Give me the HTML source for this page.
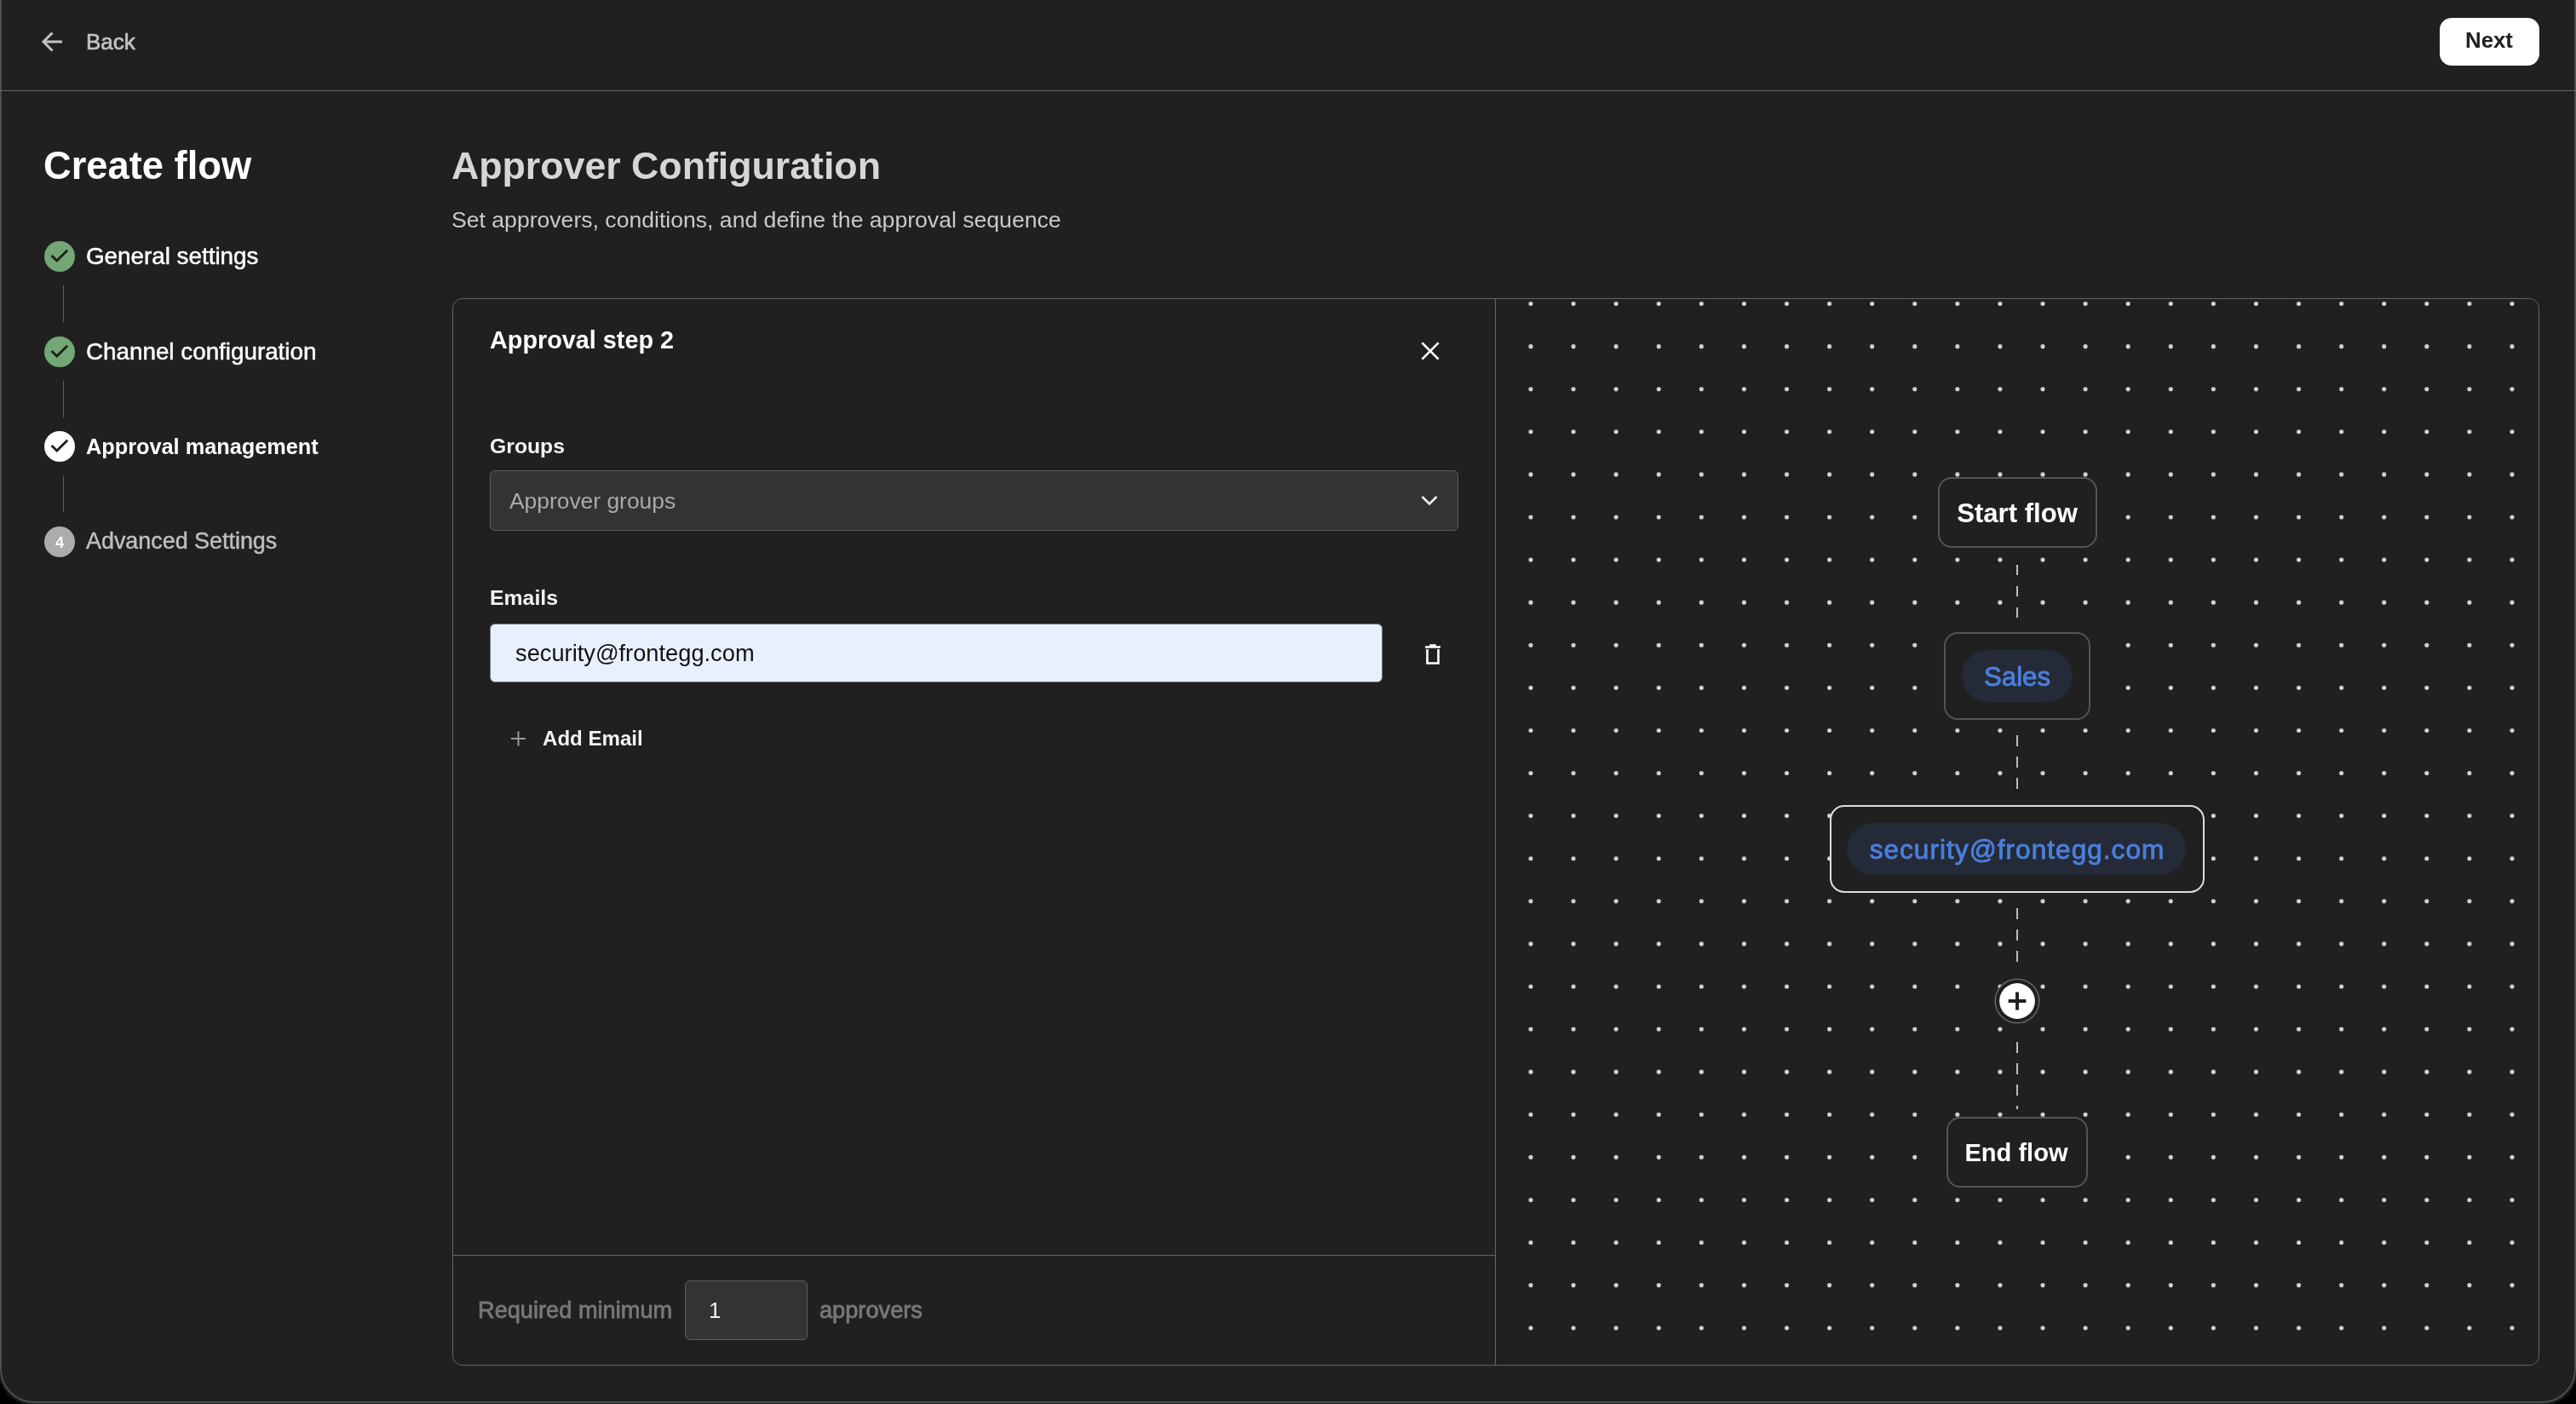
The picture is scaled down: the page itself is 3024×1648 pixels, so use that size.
<!DOCTYPE html>
<html><head><meta charset="utf-8"><title>Create flow</title>
<style>
html,body{margin:0;padding:0;background:#000;width:3024px;height:1648px;overflow:hidden;}
body{position:relative;font-family:"Liberation Sans", sans-serif;}
@media (max-width:2000px){html{zoom:0.5;}}
.t{position:absolute;white-space:nowrap;line-height:1;font-family:"Liberation Sans", sans-serif;will-change:transform;}
</style></head><body>
<div style="position:absolute;left:-2px;top:-60px;width:3028px;height:1710px;background:#161a1b;border-radius:0 0 42px 42px;"></div>
<div style="position:absolute;left:0;top:-40px;width:3024px;height:1687px;box-sizing:border-box;background:#202020;border:2px solid #4f4f4f;border-radius:0 0 40px 40px;"></div>
<div style="position:absolute;left:0px;top:106px;width:3024px;height:1px;box-sizing:border-box;background:#666;"></div>
<svg style="position:absolute;left:0;top:0" width="120" height="100"><path d="M73 49H51.5M61.5 38.5L51 49L61.5 59.5" fill="none" stroke="#c2c2c2" stroke-width="3"/></svg>
<div class="t" style="left:101.0px;top:36.0px;font-size:26px;font-weight:400;color:#c2c2c2;-webkit-text-stroke:0.7px #c2c2c2;">Back</div>
<div style="position:absolute;left:2864px;top:21px;width:117px;height:56px;box-sizing:border-box;background:#fff;border-radius:14px;"></div>
<div class="t" style="left:2422.2px;width:1000px;text-align:center;top:35.2px;font-size:25.8px;font-weight:700;color:#212121;">Next</div>
<div class="t" style="left:51.0px;top:172.2px;font-size:45.3px;font-weight:700;color:#fff;">Create flow</div>
<svg style="position:absolute;left:52px;top:283px" width="36" height="36"><circle cx="18" cy="18" r="18" fill="#73a775"/><path d="M8.6 16.9L14.8 23.1L27.2 10.8" fill="none" stroke="#1e1e1e" stroke-width="2.8"/></svg>
<div class="t" style="left:101.0px;top:286.8px;font-size:27.8px;font-weight:400;color:#fff;-webkit-text-stroke:0.5px #fff;">General settings</div>
<div style="position:absolute;left:73.5px;top:335px;width:1.0px;height:43px;box-sizing:border-box;background:#5e5e5e;"></div>
<svg style="position:absolute;left:52px;top:394.7px" width="36" height="36"><circle cx="18" cy="18" r="18" fill="#73a775"/><path d="M8.6 16.9L14.8 23.1L27.2 10.8" fill="none" stroke="#1e1e1e" stroke-width="2.8"/></svg>
<div class="t" style="left:101.0px;top:398.5px;font-size:27.8px;font-weight:400;color:#fff;-webkit-text-stroke:0.5px #fff;">Channel configuration</div>
<div style="position:absolute;left:73.5px;top:446.7px;width:1.0px;height:43.0px;box-sizing:border-box;background:#5e5e5e;"></div>
<svg style="position:absolute;left:52px;top:506px" width="36" height="36"><circle cx="18" cy="18" r="18" fill="#fff"/><path d="M8.6 16.9L14.8 23.1L27.2 10.8" fill="none" stroke="#1e1e1e" stroke-width="2.8"/></svg>
<div class="t" style="left:101.0px;top:511.9px;font-size:25.3px;font-weight:700;color:#fff;">Approval management</div>
<div style="position:absolute;left:73.5px;top:558px;width:1.0px;height:43px;box-sizing:border-box;background:#5e5e5e;"></div>
<svg style="position:absolute;left:52px;top:618px" width="36" height="36"><circle cx="18" cy="18" r="18" fill="#acacac"/></svg>
<div class="t" style="left:-430.0px;width:1000px;text-align:center;top:627.8px;font-size:18px;font-weight:700;color:#fff;">4</div>
<div class="t" style="left:101.0px;top:622.0px;font-size:26.9px;font-weight:400;color:#bfbfbf;-webkit-text-stroke:0.45px #bfbfbf;">Advanced Settings</div>
<div class="t" style="left:530.0px;top:172.7px;font-size:44.7px;font-weight:700;color:#d6d6d6;">Approver Configuration</div>
<div class="t" style="left:530.0px;top:244.9px;font-size:26.6px;font-weight:400;color:#c9c9c9;">Set approvers, conditions, and define the approval sequence</div>
<div style="position:absolute;left:531px;top:350px;width:2450px;height:1253px;box-sizing:border-box;border:1px solid #646464;border-radius:12px;"></div>
<div style="position:absolute;left:1755px;top:351px;width:1px;height:1251px;box-sizing:border-box;background:#646464;"></div>
<div style="position:absolute;left:532px;top:1473px;width:1223px;height:1px;box-sizing:border-box;background:#646464;"></div>
<svg style="position:absolute;left:1757px;top:351px" width="1223" height="1251" fill="#d2d2d2"><circle cx="39.97" cy="5.54" r="2.55"/><circle cx="39.97" cy="55.63" r="2.55"/><circle cx="39.97" cy="105.72" r="2.55"/><circle cx="39.97" cy="155.81" r="2.55"/><circle cx="39.97" cy="205.90" r="2.55"/><circle cx="39.97" cy="255.99" r="2.55"/><circle cx="39.97" cy="306.08" r="2.55"/><circle cx="39.97" cy="356.17" r="2.55"/><circle cx="39.97" cy="406.26" r="2.55"/><circle cx="39.97" cy="456.35" r="2.55"/><circle cx="39.97" cy="506.44" r="2.55"/><circle cx="39.97" cy="556.53" r="2.55"/><circle cx="39.97" cy="606.62" r="2.55"/><circle cx="39.97" cy="656.71" r="2.55"/><circle cx="39.97" cy="706.80" r="2.55"/><circle cx="39.97" cy="756.89" r="2.55"/><circle cx="39.97" cy="806.98" r="2.55"/><circle cx="39.97" cy="857.07" r="2.55"/><circle cx="39.97" cy="907.16" r="2.55"/><circle cx="39.97" cy="957.25" r="2.55"/><circle cx="39.97" cy="1007.34" r="2.55"/><circle cx="39.97" cy="1057.43" r="2.55"/><circle cx="39.97" cy="1107.52" r="2.55"/><circle cx="39.97" cy="1157.61" r="2.55"/><circle cx="39.97" cy="1207.70" r="2.55"/><circle cx="90.06" cy="5.54" r="2.55"/><circle cx="90.06" cy="55.63" r="2.55"/><circle cx="90.06" cy="105.72" r="2.55"/><circle cx="90.06" cy="155.81" r="2.55"/><circle cx="90.06" cy="205.90" r="2.55"/><circle cx="90.06" cy="255.99" r="2.55"/><circle cx="90.06" cy="306.08" r="2.55"/><circle cx="90.06" cy="356.17" r="2.55"/><circle cx="90.06" cy="406.26" r="2.55"/><circle cx="90.06" cy="456.35" r="2.55"/><circle cx="90.06" cy="506.44" r="2.55"/><circle cx="90.06" cy="556.53" r="2.55"/><circle cx="90.06" cy="606.62" r="2.55"/><circle cx="90.06" cy="656.71" r="2.55"/><circle cx="90.06" cy="706.80" r="2.55"/><circle cx="90.06" cy="756.89" r="2.55"/><circle cx="90.06" cy="806.98" r="2.55"/><circle cx="90.06" cy="857.07" r="2.55"/><circle cx="90.06" cy="907.16" r="2.55"/><circle cx="90.06" cy="957.25" r="2.55"/><circle cx="90.06" cy="1007.34" r="2.55"/><circle cx="90.06" cy="1057.43" r="2.55"/><circle cx="90.06" cy="1107.52" r="2.55"/><circle cx="90.06" cy="1157.61" r="2.55"/><circle cx="90.06" cy="1207.70" r="2.55"/><circle cx="140.14" cy="5.54" r="2.55"/><circle cx="140.14" cy="55.63" r="2.55"/><circle cx="140.14" cy="105.72" r="2.55"/><circle cx="140.14" cy="155.81" r="2.55"/><circle cx="140.14" cy="205.90" r="2.55"/><circle cx="140.14" cy="255.99" r="2.55"/><circle cx="140.14" cy="306.08" r="2.55"/><circle cx="140.14" cy="356.17" r="2.55"/><circle cx="140.14" cy="406.26" r="2.55"/><circle cx="140.14" cy="456.35" r="2.55"/><circle cx="140.14" cy="506.44" r="2.55"/><circle cx="140.14" cy="556.53" r="2.55"/><circle cx="140.14" cy="606.62" r="2.55"/><circle cx="140.14" cy="656.71" r="2.55"/><circle cx="140.14" cy="706.80" r="2.55"/><circle cx="140.14" cy="756.89" r="2.55"/><circle cx="140.14" cy="806.98" r="2.55"/><circle cx="140.14" cy="857.07" r="2.55"/><circle cx="140.14" cy="907.16" r="2.55"/><circle cx="140.14" cy="957.25" r="2.55"/><circle cx="140.14" cy="1007.34" r="2.55"/><circle cx="140.14" cy="1057.43" r="2.55"/><circle cx="140.14" cy="1107.52" r="2.55"/><circle cx="140.14" cy="1157.61" r="2.55"/><circle cx="140.14" cy="1207.70" r="2.55"/><circle cx="190.23" cy="5.54" r="2.55"/><circle cx="190.23" cy="55.63" r="2.55"/><circle cx="190.23" cy="105.72" r="2.55"/><circle cx="190.23" cy="155.81" r="2.55"/><circle cx="190.23" cy="205.90" r="2.55"/><circle cx="190.23" cy="255.99" r="2.55"/><circle cx="190.23" cy="306.08" r="2.55"/><circle cx="190.23" cy="356.17" r="2.55"/><circle cx="190.23" cy="406.26" r="2.55"/><circle cx="190.23" cy="456.35" r="2.55"/><circle cx="190.23" cy="506.44" r="2.55"/><circle cx="190.23" cy="556.53" r="2.55"/><circle cx="190.23" cy="606.62" r="2.55"/><circle cx="190.23" cy="656.71" r="2.55"/><circle cx="190.23" cy="706.80" r="2.55"/><circle cx="190.23" cy="756.89" r="2.55"/><circle cx="190.23" cy="806.98" r="2.55"/><circle cx="190.23" cy="857.07" r="2.55"/><circle cx="190.23" cy="907.16" r="2.55"/><circle cx="190.23" cy="957.25" r="2.55"/><circle cx="190.23" cy="1007.34" r="2.55"/><circle cx="190.23" cy="1057.43" r="2.55"/><circle cx="190.23" cy="1107.52" r="2.55"/><circle cx="190.23" cy="1157.61" r="2.55"/><circle cx="190.23" cy="1207.70" r="2.55"/><circle cx="240.32" cy="5.54" r="2.55"/><circle cx="240.32" cy="55.63" r="2.55"/><circle cx="240.32" cy="105.72" r="2.55"/><circle cx="240.32" cy="155.81" r="2.55"/><circle cx="240.32" cy="205.90" r="2.55"/><circle cx="240.32" cy="255.99" r="2.55"/><circle cx="240.32" cy="306.08" r="2.55"/><circle cx="240.32" cy="356.17" r="2.55"/><circle cx="240.32" cy="406.26" r="2.55"/><circle cx="240.32" cy="456.35" r="2.55"/><circle cx="240.32" cy="506.44" r="2.55"/><circle cx="240.32" cy="556.53" r="2.55"/><circle cx="240.32" cy="606.62" r="2.55"/><circle cx="240.32" cy="656.71" r="2.55"/><circle cx="240.32" cy="706.80" r="2.55"/><circle cx="240.32" cy="756.89" r="2.55"/><circle cx="240.32" cy="806.98" r="2.55"/><circle cx="240.32" cy="857.07" r="2.55"/><circle cx="240.32" cy="907.16" r="2.55"/><circle cx="240.32" cy="957.25" r="2.55"/><circle cx="240.32" cy="1007.34" r="2.55"/><circle cx="240.32" cy="1057.43" r="2.55"/><circle cx="240.32" cy="1107.52" r="2.55"/><circle cx="240.32" cy="1157.61" r="2.55"/><circle cx="240.32" cy="1207.70" r="2.55"/><circle cx="290.40" cy="5.54" r="2.55"/><circle cx="290.40" cy="55.63" r="2.55"/><circle cx="290.40" cy="105.72" r="2.55"/><circle cx="290.40" cy="155.81" r="2.55"/><circle cx="290.40" cy="205.90" r="2.55"/><circle cx="290.40" cy="255.99" r="2.55"/><circle cx="290.40" cy="306.08" r="2.55"/><circle cx="290.40" cy="356.17" r="2.55"/><circle cx="290.40" cy="406.26" r="2.55"/><circle cx="290.40" cy="456.35" r="2.55"/><circle cx="290.40" cy="506.44" r="2.55"/><circle cx="290.40" cy="556.53" r="2.55"/><circle cx="290.40" cy="606.62" r="2.55"/><circle cx="290.40" cy="656.71" r="2.55"/><circle cx="290.40" cy="706.80" r="2.55"/><circle cx="290.40" cy="756.89" r="2.55"/><circle cx="290.40" cy="806.98" r="2.55"/><circle cx="290.40" cy="857.07" r="2.55"/><circle cx="290.40" cy="907.16" r="2.55"/><circle cx="290.40" cy="957.25" r="2.55"/><circle cx="290.40" cy="1007.34" r="2.55"/><circle cx="290.40" cy="1057.43" r="2.55"/><circle cx="290.40" cy="1107.52" r="2.55"/><circle cx="290.40" cy="1157.61" r="2.55"/><circle cx="290.40" cy="1207.70" r="2.55"/><circle cx="340.49" cy="5.54" r="2.55"/><circle cx="340.49" cy="55.63" r="2.55"/><circle cx="340.49" cy="105.72" r="2.55"/><circle cx="340.49" cy="155.81" r="2.55"/><circle cx="340.49" cy="205.90" r="2.55"/><circle cx="340.49" cy="255.99" r="2.55"/><circle cx="340.49" cy="306.08" r="2.55"/><circle cx="340.49" cy="356.17" r="2.55"/><circle cx="340.49" cy="406.26" r="2.55"/><circle cx="340.49" cy="456.35" r="2.55"/><circle cx="340.49" cy="506.44" r="2.55"/><circle cx="340.49" cy="556.53" r="2.55"/><circle cx="340.49" cy="606.62" r="2.55"/><circle cx="340.49" cy="656.71" r="2.55"/><circle cx="340.49" cy="706.80" r="2.55"/><circle cx="340.49" cy="756.89" r="2.55"/><circle cx="340.49" cy="806.98" r="2.55"/><circle cx="340.49" cy="857.07" r="2.55"/><circle cx="340.49" cy="907.16" r="2.55"/><circle cx="340.49" cy="957.25" r="2.55"/><circle cx="340.49" cy="1007.34" r="2.55"/><circle cx="340.49" cy="1057.43" r="2.55"/><circle cx="340.49" cy="1107.52" r="2.55"/><circle cx="340.49" cy="1157.61" r="2.55"/><circle cx="340.49" cy="1207.70" r="2.55"/><circle cx="390.58" cy="5.54" r="2.55"/><circle cx="390.58" cy="55.63" r="2.55"/><circle cx="390.58" cy="105.72" r="2.55"/><circle cx="390.58" cy="155.81" r="2.55"/><circle cx="390.58" cy="205.90" r="2.55"/><circle cx="390.58" cy="255.99" r="2.55"/><circle cx="390.58" cy="306.08" r="2.55"/><circle cx="390.58" cy="356.17" r="2.55"/><circle cx="390.58" cy="406.26" r="2.55"/><circle cx="390.58" cy="456.35" r="2.55"/><circle cx="390.58" cy="506.44" r="2.55"/><circle cx="390.58" cy="556.53" r="2.55"/><circle cx="390.58" cy="606.62" r="2.55"/><circle cx="390.58" cy="656.71" r="2.55"/><circle cx="390.58" cy="706.80" r="2.55"/><circle cx="390.58" cy="756.89" r="2.55"/><circle cx="390.58" cy="806.98" r="2.55"/><circle cx="390.58" cy="857.07" r="2.55"/><circle cx="390.58" cy="907.16" r="2.55"/><circle cx="390.58" cy="957.25" r="2.55"/><circle cx="390.58" cy="1007.34" r="2.55"/><circle cx="390.58" cy="1057.43" r="2.55"/><circle cx="390.58" cy="1107.52" r="2.55"/><circle cx="390.58" cy="1157.61" r="2.55"/><circle cx="390.58" cy="1207.70" r="2.55"/><circle cx="440.67" cy="5.54" r="2.55"/><circle cx="440.67" cy="55.63" r="2.55"/><circle cx="440.67" cy="105.72" r="2.55"/><circle cx="440.67" cy="155.81" r="2.55"/><circle cx="440.67" cy="205.90" r="2.55"/><circle cx="440.67" cy="255.99" r="2.55"/><circle cx="440.67" cy="306.08" r="2.55"/><circle cx="440.67" cy="356.17" r="2.55"/><circle cx="440.67" cy="406.26" r="2.55"/><circle cx="440.67" cy="456.35" r="2.55"/><circle cx="440.67" cy="506.44" r="2.55"/><circle cx="440.67" cy="556.53" r="2.55"/><circle cx="440.67" cy="606.62" r="2.55"/><circle cx="440.67" cy="656.71" r="2.55"/><circle cx="440.67" cy="706.80" r="2.55"/><circle cx="440.67" cy="756.89" r="2.55"/><circle cx="440.67" cy="806.98" r="2.55"/><circle cx="440.67" cy="857.07" r="2.55"/><circle cx="440.67" cy="907.16" r="2.55"/><circle cx="440.67" cy="957.25" r="2.55"/><circle cx="440.67" cy="1007.34" r="2.55"/><circle cx="440.67" cy="1057.43" r="2.55"/><circle cx="440.67" cy="1107.52" r="2.55"/><circle cx="440.67" cy="1157.61" r="2.55"/><circle cx="440.67" cy="1207.70" r="2.55"/><circle cx="490.75" cy="5.54" r="2.55"/><circle cx="490.75" cy="55.63" r="2.55"/><circle cx="490.75" cy="105.72" r="2.55"/><circle cx="490.75" cy="155.81" r="2.55"/><circle cx="490.75" cy="205.90" r="2.55"/><circle cx="490.75" cy="255.99" r="2.55"/><circle cx="490.75" cy="306.08" r="2.55"/><circle cx="490.75" cy="356.17" r="2.55"/><circle cx="490.75" cy="406.26" r="2.55"/><circle cx="490.75" cy="456.35" r="2.55"/><circle cx="490.75" cy="506.44" r="2.55"/><circle cx="490.75" cy="556.53" r="2.55"/><circle cx="490.75" cy="606.62" r="2.55"/><circle cx="490.75" cy="656.71" r="2.55"/><circle cx="490.75" cy="706.80" r="2.55"/><circle cx="490.75" cy="756.89" r="2.55"/><circle cx="490.75" cy="806.98" r="2.55"/><circle cx="490.75" cy="857.07" r="2.55"/><circle cx="490.75" cy="907.16" r="2.55"/><circle cx="490.75" cy="957.25" r="2.55"/><circle cx="490.75" cy="1007.34" r="2.55"/><circle cx="490.75" cy="1057.43" r="2.55"/><circle cx="490.75" cy="1107.52" r="2.55"/><circle cx="490.75" cy="1157.61" r="2.55"/><circle cx="490.75" cy="1207.70" r="2.55"/><circle cx="540.84" cy="5.54" r="2.55"/><circle cx="540.84" cy="55.63" r="2.55"/><circle cx="540.84" cy="105.72" r="2.55"/><circle cx="540.84" cy="155.81" r="2.55"/><circle cx="540.84" cy="205.90" r="2.55"/><circle cx="540.84" cy="255.99" r="2.55"/><circle cx="540.84" cy="306.08" r="2.55"/><circle cx="540.84" cy="356.17" r="2.55"/><circle cx="540.84" cy="406.26" r="2.55"/><circle cx="540.84" cy="456.35" r="2.55"/><circle cx="540.84" cy="506.44" r="2.55"/><circle cx="540.84" cy="556.53" r="2.55"/><circle cx="540.84" cy="606.62" r="2.55"/><circle cx="540.84" cy="656.71" r="2.55"/><circle cx="540.84" cy="706.80" r="2.55"/><circle cx="540.84" cy="756.89" r="2.55"/><circle cx="540.84" cy="806.98" r="2.55"/><circle cx="540.84" cy="857.07" r="2.55"/><circle cx="540.84" cy="907.16" r="2.55"/><circle cx="540.84" cy="957.25" r="2.55"/><circle cx="540.84" cy="1007.34" r="2.55"/><circle cx="540.84" cy="1057.43" r="2.55"/><circle cx="540.84" cy="1107.52" r="2.55"/><circle cx="540.84" cy="1157.61" r="2.55"/><circle cx="540.84" cy="1207.70" r="2.55"/><circle cx="590.93" cy="5.54" r="2.55"/><circle cx="590.93" cy="55.63" r="2.55"/><circle cx="590.93" cy="105.72" r="2.55"/><circle cx="590.93" cy="155.81" r="2.55"/><circle cx="590.93" cy="205.90" r="2.55"/><circle cx="590.93" cy="255.99" r="2.55"/><circle cx="590.93" cy="306.08" r="2.55"/><circle cx="590.93" cy="356.17" r="2.55"/><circle cx="590.93" cy="406.26" r="2.55"/><circle cx="590.93" cy="456.35" r="2.55"/><circle cx="590.93" cy="506.44" r="2.55"/><circle cx="590.93" cy="556.53" r="2.55"/><circle cx="590.93" cy="606.62" r="2.55"/><circle cx="590.93" cy="656.71" r="2.55"/><circle cx="590.93" cy="706.80" r="2.55"/><circle cx="590.93" cy="756.89" r="2.55"/><circle cx="590.93" cy="806.98" r="2.55"/><circle cx="590.93" cy="857.07" r="2.55"/><circle cx="590.93" cy="907.16" r="2.55"/><circle cx="590.93" cy="957.25" r="2.55"/><circle cx="590.93" cy="1007.34" r="2.55"/><circle cx="590.93" cy="1057.43" r="2.55"/><circle cx="590.93" cy="1107.52" r="2.55"/><circle cx="590.93" cy="1157.61" r="2.55"/><circle cx="590.93" cy="1207.70" r="2.55"/><circle cx="641.01" cy="5.54" r="2.55"/><circle cx="641.01" cy="55.63" r="2.55"/><circle cx="641.01" cy="105.72" r="2.55"/><circle cx="641.01" cy="155.81" r="2.55"/><circle cx="641.01" cy="205.90" r="2.55"/><circle cx="641.01" cy="255.99" r="2.55"/><circle cx="641.01" cy="306.08" r="2.55"/><circle cx="641.01" cy="356.17" r="2.55"/><circle cx="641.01" cy="406.26" r="2.55"/><circle cx="641.01" cy="456.35" r="2.55"/><circle cx="641.01" cy="506.44" r="2.55"/><circle cx="641.01" cy="556.53" r="2.55"/><circle cx="641.01" cy="606.62" r="2.55"/><circle cx="641.01" cy="656.71" r="2.55"/><circle cx="641.01" cy="706.80" r="2.55"/><circle cx="641.01" cy="756.89" r="2.55"/><circle cx="641.01" cy="806.98" r="2.55"/><circle cx="641.01" cy="857.07" r="2.55"/><circle cx="641.01" cy="907.16" r="2.55"/><circle cx="641.01" cy="957.25" r="2.55"/><circle cx="641.01" cy="1007.34" r="2.55"/><circle cx="641.01" cy="1057.43" r="2.55"/><circle cx="641.01" cy="1107.52" r="2.55"/><circle cx="641.01" cy="1157.61" r="2.55"/><circle cx="641.01" cy="1207.70" r="2.55"/><circle cx="691.10" cy="5.54" r="2.55"/><circle cx="691.10" cy="55.63" r="2.55"/><circle cx="691.10" cy="105.72" r="2.55"/><circle cx="691.10" cy="155.81" r="2.55"/><circle cx="691.10" cy="205.90" r="2.55"/><circle cx="691.10" cy="255.99" r="2.55"/><circle cx="691.10" cy="306.08" r="2.55"/><circle cx="691.10" cy="356.17" r="2.55"/><circle cx="691.10" cy="406.26" r="2.55"/><circle cx="691.10" cy="456.35" r="2.55"/><circle cx="691.10" cy="506.44" r="2.55"/><circle cx="691.10" cy="556.53" r="2.55"/><circle cx="691.10" cy="606.62" r="2.55"/><circle cx="691.10" cy="656.71" r="2.55"/><circle cx="691.10" cy="706.80" r="2.55"/><circle cx="691.10" cy="756.89" r="2.55"/><circle cx="691.10" cy="806.98" r="2.55"/><circle cx="691.10" cy="857.07" r="2.55"/><circle cx="691.10" cy="907.16" r="2.55"/><circle cx="691.10" cy="957.25" r="2.55"/><circle cx="691.10" cy="1007.34" r="2.55"/><circle cx="691.10" cy="1057.43" r="2.55"/><circle cx="691.10" cy="1107.52" r="2.55"/><circle cx="691.10" cy="1157.61" r="2.55"/><circle cx="691.10" cy="1207.70" r="2.55"/><circle cx="741.19" cy="5.54" r="2.55"/><circle cx="741.19" cy="55.63" r="2.55"/><circle cx="741.19" cy="105.72" r="2.55"/><circle cx="741.19" cy="155.81" r="2.55"/><circle cx="741.19" cy="205.90" r="2.55"/><circle cx="741.19" cy="255.99" r="2.55"/><circle cx="741.19" cy="306.08" r="2.55"/><circle cx="741.19" cy="356.17" r="2.55"/><circle cx="741.19" cy="406.26" r="2.55"/><circle cx="741.19" cy="456.35" r="2.55"/><circle cx="741.19" cy="506.44" r="2.55"/><circle cx="741.19" cy="556.53" r="2.55"/><circle cx="741.19" cy="606.62" r="2.55"/><circle cx="741.19" cy="656.71" r="2.55"/><circle cx="741.19" cy="706.80" r="2.55"/><circle cx="741.19" cy="756.89" r="2.55"/><circle cx="741.19" cy="806.98" r="2.55"/><circle cx="741.19" cy="857.07" r="2.55"/><circle cx="741.19" cy="907.16" r="2.55"/><circle cx="741.19" cy="957.25" r="2.55"/><circle cx="741.19" cy="1007.34" r="2.55"/><circle cx="741.19" cy="1057.43" r="2.55"/><circle cx="741.19" cy="1107.52" r="2.55"/><circle cx="741.19" cy="1157.61" r="2.55"/><circle cx="741.19" cy="1207.70" r="2.55"/><circle cx="791.28" cy="5.54" r="2.55"/><circle cx="791.28" cy="55.63" r="2.55"/><circle cx="791.28" cy="105.72" r="2.55"/><circle cx="791.28" cy="155.81" r="2.55"/><circle cx="791.28" cy="205.90" r="2.55"/><circle cx="791.28" cy="255.99" r="2.55"/><circle cx="791.28" cy="306.08" r="2.55"/><circle cx="791.28" cy="356.17" r="2.55"/><circle cx="791.28" cy="406.26" r="2.55"/><circle cx="791.28" cy="456.35" r="2.55"/><circle cx="791.28" cy="506.44" r="2.55"/><circle cx="791.28" cy="556.53" r="2.55"/><circle cx="791.28" cy="606.62" r="2.55"/><circle cx="791.28" cy="656.71" r="2.55"/><circle cx="791.28" cy="706.80" r="2.55"/><circle cx="791.28" cy="756.89" r="2.55"/><circle cx="791.28" cy="806.98" r="2.55"/><circle cx="791.28" cy="857.07" r="2.55"/><circle cx="791.28" cy="907.16" r="2.55"/><circle cx="791.28" cy="957.25" r="2.55"/><circle cx="791.28" cy="1007.34" r="2.55"/><circle cx="791.28" cy="1057.43" r="2.55"/><circle cx="791.28" cy="1107.52" r="2.55"/><circle cx="791.28" cy="1157.61" r="2.55"/><circle cx="791.28" cy="1207.70" r="2.55"/><circle cx="841.36" cy="5.54" r="2.55"/><circle cx="841.36" cy="55.63" r="2.55"/><circle cx="841.36" cy="105.72" r="2.55"/><circle cx="841.36" cy="155.81" r="2.55"/><circle cx="841.36" cy="205.90" r="2.55"/><circle cx="841.36" cy="255.99" r="2.55"/><circle cx="841.36" cy="306.08" r="2.55"/><circle cx="841.36" cy="356.17" r="2.55"/><circle cx="841.36" cy="406.26" r="2.55"/><circle cx="841.36" cy="456.35" r="2.55"/><circle cx="841.36" cy="506.44" r="2.55"/><circle cx="841.36" cy="556.53" r="2.55"/><circle cx="841.36" cy="606.62" r="2.55"/><circle cx="841.36" cy="656.71" r="2.55"/><circle cx="841.36" cy="706.80" r="2.55"/><circle cx="841.36" cy="756.89" r="2.55"/><circle cx="841.36" cy="806.98" r="2.55"/><circle cx="841.36" cy="857.07" r="2.55"/><circle cx="841.36" cy="907.16" r="2.55"/><circle cx="841.36" cy="957.25" r="2.55"/><circle cx="841.36" cy="1007.34" r="2.55"/><circle cx="841.36" cy="1057.43" r="2.55"/><circle cx="841.36" cy="1107.52" r="2.55"/><circle cx="841.36" cy="1157.61" r="2.55"/><circle cx="841.36" cy="1207.70" r="2.55"/><circle cx="891.45" cy="5.54" r="2.55"/><circle cx="891.45" cy="55.63" r="2.55"/><circle cx="891.45" cy="105.72" r="2.55"/><circle cx="891.45" cy="155.81" r="2.55"/><circle cx="891.45" cy="205.90" r="2.55"/><circle cx="891.45" cy="255.99" r="2.55"/><circle cx="891.45" cy="306.08" r="2.55"/><circle cx="891.45" cy="356.17" r="2.55"/><circle cx="891.45" cy="406.26" r="2.55"/><circle cx="891.45" cy="456.35" r="2.55"/><circle cx="891.45" cy="506.44" r="2.55"/><circle cx="891.45" cy="556.53" r="2.55"/><circle cx="891.45" cy="606.62" r="2.55"/><circle cx="891.45" cy="656.71" r="2.55"/><circle cx="891.45" cy="706.80" r="2.55"/><circle cx="891.45" cy="756.89" r="2.55"/><circle cx="891.45" cy="806.98" r="2.55"/><circle cx="891.45" cy="857.07" r="2.55"/><circle cx="891.45" cy="907.16" r="2.55"/><circle cx="891.45" cy="957.25" r="2.55"/><circle cx="891.45" cy="1007.34" r="2.55"/><circle cx="891.45" cy="1057.43" r="2.55"/><circle cx="891.45" cy="1107.52" r="2.55"/><circle cx="891.45" cy="1157.61" r="2.55"/><circle cx="891.45" cy="1207.70" r="2.55"/><circle cx="941.54" cy="5.54" r="2.55"/><circle cx="941.54" cy="55.63" r="2.55"/><circle cx="941.54" cy="105.72" r="2.55"/><circle cx="941.54" cy="155.81" r="2.55"/><circle cx="941.54" cy="205.90" r="2.55"/><circle cx="941.54" cy="255.99" r="2.55"/><circle cx="941.54" cy="306.08" r="2.55"/><circle cx="941.54" cy="356.17" r="2.55"/><circle cx="941.54" cy="406.26" r="2.55"/><circle cx="941.54" cy="456.35" r="2.55"/><circle cx="941.54" cy="506.44" r="2.55"/><circle cx="941.54" cy="556.53" r="2.55"/><circle cx="941.54" cy="606.62" r="2.55"/><circle cx="941.54" cy="656.71" r="2.55"/><circle cx="941.54" cy="706.80" r="2.55"/><circle cx="941.54" cy="756.89" r="2.55"/><circle cx="941.54" cy="806.98" r="2.55"/><circle cx="941.54" cy="857.07" r="2.55"/><circle cx="941.54" cy="907.16" r="2.55"/><circle cx="941.54" cy="957.25" r="2.55"/><circle cx="941.54" cy="1007.34" r="2.55"/><circle cx="941.54" cy="1057.43" r="2.55"/><circle cx="941.54" cy="1107.52" r="2.55"/><circle cx="941.54" cy="1157.61" r="2.55"/><circle cx="941.54" cy="1207.70" r="2.55"/><circle cx="991.62" cy="5.54" r="2.55"/><circle cx="991.62" cy="55.63" r="2.55"/><circle cx="991.62" cy="105.72" r="2.55"/><circle cx="991.62" cy="155.81" r="2.55"/><circle cx="991.62" cy="205.90" r="2.55"/><circle cx="991.62" cy="255.99" r="2.55"/><circle cx="991.62" cy="306.08" r="2.55"/><circle cx="991.62" cy="356.17" r="2.55"/><circle cx="991.62" cy="406.26" r="2.55"/><circle cx="991.62" cy="456.35" r="2.55"/><circle cx="991.62" cy="506.44" r="2.55"/><circle cx="991.62" cy="556.53" r="2.55"/><circle cx="991.62" cy="606.62" r="2.55"/><circle cx="991.62" cy="656.71" r="2.55"/><circle cx="991.62" cy="706.80" r="2.55"/><circle cx="991.62" cy="756.89" r="2.55"/><circle cx="991.62" cy="806.98" r="2.55"/><circle cx="991.62" cy="857.07" r="2.55"/><circle cx="991.62" cy="907.16" r="2.55"/><circle cx="991.62" cy="957.25" r="2.55"/><circle cx="991.62" cy="1007.34" r="2.55"/><circle cx="991.62" cy="1057.43" r="2.55"/><circle cx="991.62" cy="1107.52" r="2.55"/><circle cx="991.62" cy="1157.61" r="2.55"/><circle cx="991.62" cy="1207.70" r="2.55"/><circle cx="1041.71" cy="5.54" r="2.55"/><circle cx="1041.71" cy="55.63" r="2.55"/><circle cx="1041.71" cy="105.72" r="2.55"/><circle cx="1041.71" cy="155.81" r="2.55"/><circle cx="1041.71" cy="205.90" r="2.55"/><circle cx="1041.71" cy="255.99" r="2.55"/><circle cx="1041.71" cy="306.08" r="2.55"/><circle cx="1041.71" cy="356.17" r="2.55"/><circle cx="1041.71" cy="406.26" r="2.55"/><circle cx="1041.71" cy="456.35" r="2.55"/><circle cx="1041.71" cy="506.44" r="2.55"/><circle cx="1041.71" cy="556.53" r="2.55"/><circle cx="1041.71" cy="606.62" r="2.55"/><circle cx="1041.71" cy="656.71" r="2.55"/><circle cx="1041.71" cy="706.80" r="2.55"/><circle cx="1041.71" cy="756.89" r="2.55"/><circle cx="1041.71" cy="806.98" r="2.55"/><circle cx="1041.71" cy="857.07" r="2.55"/><circle cx="1041.71" cy="907.16" r="2.55"/><circle cx="1041.71" cy="957.25" r="2.55"/><circle cx="1041.71" cy="1007.34" r="2.55"/><circle cx="1041.71" cy="1057.43" r="2.55"/><circle cx="1041.71" cy="1107.52" r="2.55"/><circle cx="1041.71" cy="1157.61" r="2.55"/><circle cx="1041.71" cy="1207.70" r="2.55"/><circle cx="1091.80" cy="5.54" r="2.55"/><circle cx="1091.80" cy="55.63" r="2.55"/><circle cx="1091.80" cy="105.72" r="2.55"/><circle cx="1091.80" cy="155.81" r="2.55"/><circle cx="1091.80" cy="205.90" r="2.55"/><circle cx="1091.80" cy="255.99" r="2.55"/><circle cx="1091.80" cy="306.08" r="2.55"/><circle cx="1091.80" cy="356.17" r="2.55"/><circle cx="1091.80" cy="406.26" r="2.55"/><circle cx="1091.80" cy="456.35" r="2.55"/><circle cx="1091.80" cy="506.44" r="2.55"/><circle cx="1091.80" cy="556.53" r="2.55"/><circle cx="1091.80" cy="606.62" r="2.55"/><circle cx="1091.80" cy="656.71" r="2.55"/><circle cx="1091.80" cy="706.80" r="2.55"/><circle cx="1091.80" cy="756.89" r="2.55"/><circle cx="1091.80" cy="806.98" r="2.55"/><circle cx="1091.80" cy="857.07" r="2.55"/><circle cx="1091.80" cy="907.16" r="2.55"/><circle cx="1091.80" cy="957.25" r="2.55"/><circle cx="1091.80" cy="1007.34" r="2.55"/><circle cx="1091.80" cy="1057.43" r="2.55"/><circle cx="1091.80" cy="1107.52" r="2.55"/><circle cx="1091.80" cy="1157.61" r="2.55"/><circle cx="1091.80" cy="1207.70" r="2.55"/><circle cx="1141.88" cy="5.54" r="2.55"/><circle cx="1141.88" cy="55.63" r="2.55"/><circle cx="1141.88" cy="105.72" r="2.55"/><circle cx="1141.88" cy="155.81" r="2.55"/><circle cx="1141.88" cy="205.90" r="2.55"/><circle cx="1141.88" cy="255.99" r="2.55"/><circle cx="1141.88" cy="306.08" r="2.55"/><circle cx="1141.88" cy="356.17" r="2.55"/><circle cx="1141.88" cy="406.26" r="2.55"/><circle cx="1141.88" cy="456.35" r="2.55"/><circle cx="1141.88" cy="506.44" r="2.55"/><circle cx="1141.88" cy="556.53" r="2.55"/><circle cx="1141.88" cy="606.62" r="2.55"/><circle cx="1141.88" cy="656.71" r="2.55"/><circle cx="1141.88" cy="706.80" r="2.55"/><circle cx="1141.88" cy="756.89" r="2.55"/><circle cx="1141.88" cy="806.98" r="2.55"/><circle cx="1141.88" cy="857.07" r="2.55"/><circle cx="1141.88" cy="907.16" r="2.55"/><circle cx="1141.88" cy="957.25" r="2.55"/><circle cx="1141.88" cy="1007.34" r="2.55"/><circle cx="1141.88" cy="1057.43" r="2.55"/><circle cx="1141.88" cy="1107.52" r="2.55"/><circle cx="1141.88" cy="1157.61" r="2.55"/><circle cx="1141.88" cy="1207.70" r="2.55"/><circle cx="1191.97" cy="5.54" r="2.55"/><circle cx="1191.97" cy="55.63" r="2.55"/><circle cx="1191.97" cy="105.72" r="2.55"/><circle cx="1191.97" cy="155.81" r="2.55"/><circle cx="1191.97" cy="205.90" r="2.55"/><circle cx="1191.97" cy="255.99" r="2.55"/><circle cx="1191.97" cy="306.08" r="2.55"/><circle cx="1191.97" cy="356.17" r="2.55"/><circle cx="1191.97" cy="406.26" r="2.55"/><circle cx="1191.97" cy="456.35" r="2.55"/><circle cx="1191.97" cy="506.44" r="2.55"/><circle cx="1191.97" cy="556.53" r="2.55"/><circle cx="1191.97" cy="606.62" r="2.55"/><circle cx="1191.97" cy="656.71" r="2.55"/><circle cx="1191.97" cy="706.80" r="2.55"/><circle cx="1191.97" cy="756.89" r="2.55"/><circle cx="1191.97" cy="806.98" r="2.55"/><circle cx="1191.97" cy="857.07" r="2.55"/><circle cx="1191.97" cy="907.16" r="2.55"/><circle cx="1191.97" cy="957.25" r="2.55"/><circle cx="1191.97" cy="1007.34" r="2.55"/><circle cx="1191.97" cy="1057.43" r="2.55"/><circle cx="1191.97" cy="1107.52" r="2.55"/><circle cx="1191.97" cy="1157.61" r="2.55"/><circle cx="1191.97" cy="1207.70" r="2.55"/></svg>
<div class="t" style="left:575.0px;top:384.6px;font-size:28.8px;font-weight:700;color:#fff;">Approval step 2</div>
<svg style="position:absolute;left:1664px;top:397px" width="30" height="30"><path d="M5.4 5.4L24.6 24.6M24.6 5.4L5.4 24.6" stroke="#fff" stroke-width="2.7"/></svg>
<div class="t" style="left:575.0px;top:511.9px;font-size:24.75px;font-weight:700;color:#f2f2f2;">Groups</div>
<div style="position:absolute;left:575px;top:552px;width:1137px;height:71px;box-sizing:border-box;background:#333;border:1px solid #5e5e5e;border-radius:6px;"></div>
<div class="t" style="left:598.0px;top:574.6px;font-size:26.4px;font-weight:400;color:#a9a9a9;">Approver groups</div>
<svg style="position:absolute;left:1660px;top:575px" width="36" height="26"><path d="M9.5 8L18 16.5L26.5 8" fill="none" stroke="#eee" stroke-width="2.6"/></svg>
<div class="t" style="left:574.5px;top:690.3px;font-size:24.8px;font-weight:700;color:#f2f2f2;">Emails</div>
<div style="position:absolute;left:575px;top:731.5px;width:1047.5px;height:69.0px;box-sizing:border-box;background:#e8f0fe;border:1px solid #777;border-radius:6px;"></div>
<div class="t" style="left:605.0px;top:752.5px;font-size:27.25px;font-weight:400;color:#111;">security@frontegg.com</div>
<svg style="position:absolute;left:1668px;top:752px" width="28" height="32"><path d="M5 7.5H23M11.5 7.5V5.5H16.5V7.5" fill="none" stroke="#fff" stroke-width="2.4"/><path d="M7.5 10V26.5H20.5V10" fill="none" stroke="#fff" stroke-width="2.6"/></svg>
<svg style="position:absolute;left:596px;top:854px" width="26" height="26"><path d="M12.5 4.5V21.5M4 13H21" stroke="#9b9b9b" stroke-width="2"/></svg>
<div class="t" style="left:637.0px;top:855.4px;font-size:24.07px;font-weight:700;color:#f2f2f2;">Add Email</div>
<div class="t" style="left:560.5px;top:1524.0px;font-size:27.2px;font-weight:400;color:#787878;-webkit-text-stroke:0.8px #787878;">Required minimum</div>
<div style="position:absolute;left:804px;top:1503px;width:144px;height:70px;box-sizing:border-box;background:#333;border:1px solid #5e5e5e;border-radius:6px;"></div>
<div class="t" style="left:832.0px;top:1525.0px;font-size:26px;font-weight:400;color:#eee;">1</div>
<div class="t" style="left:962.0px;top:1524.0px;font-size:27.2px;font-weight:400;color:#787878;-webkit-text-stroke:0.8px #787878;">approvers</div>
<div style="position:absolute;left:2275px;top:559.5px;width:187px;height:83.5px;box-sizing:border-box;background:#202020;border:2px solid #555;border-radius:16px;"></div>
<div class="t" style="left:1868.4px;width:1000px;text-align:center;top:586.6px;font-size:31.1px;font-weight:700;color:#fff;">Start flow</div>
<div style="position:absolute;left:2281.5px;top:742px;width:172.5px;height:103px;box-sizing:border-box;background:#202020;border:2px solid #555;border-radius:16px;"></div>
<div style="position:absolute;left:2302.7px;top:763.3px;width:130.60000000000036px;height:61.10000000000002px;box-sizing:border-box;background:#242a37;border-radius:31px;"></div>
<div class="t" style="left:1868.2px;width:1000px;text-align:center;top:779.1px;font-size:31.2px;font-weight:400;color:#4a7fdc;-webkit-text-stroke:0.9px #4a7fdc;">Sales</div>
<div style="position:absolute;left:2147.5px;top:945px;width:440.0px;height:103px;box-sizing:border-box;background:#202020;border:2px solid #dedede;border-radius:17px;"></div>
<div style="position:absolute;left:2168.2px;top:965.9px;width:398.2000000000003px;height:60.69999999999993px;box-sizing:border-box;background:#242a37;border-radius:31px;"></div>
<div class="t" style="left:1867.7px;width:1000px;text-align:center;top:981.6px;font-size:31.6px;font-weight:400;color:#4a7fdc;-webkit-text-stroke:0.9px #4a7fdc;letter-spacing:1.02px;">security@frontegg.com</div>
<div style="position:absolute;left:2285px;top:1310.5px;width:166px;height:83.5px;box-sizing:border-box;background:#202020;border:2px solid #555;border-radius:16px;"></div>
<div class="t" style="left:1867.3px;width:1000px;text-align:center;top:1339.4px;font-size:29.1px;font-weight:700;color:#fff;">End flow</div>
<div style="position:absolute;left:2367px;top:663px;width:2.400000000000091px;height:12.299999999999955px;box-sizing:border-box;background:#bcbcc0;"></div>
<div style="position:absolute;left:2367px;top:688px;width:2.400000000000091px;height:12.299999999999955px;box-sizing:border-box;background:#bcbcc0;"></div>
<div style="position:absolute;left:2367px;top:713px;width:2.400000000000091px;height:12.399999999999977px;box-sizing:border-box;background:#bcbcc0;"></div>
<div style="position:absolute;left:2367px;top:863px;width:2.400000000000091px;height:12.700000000000045px;box-sizing:border-box;background:#bcbcc0;"></div>
<div style="position:absolute;left:2367px;top:888.2px;width:2.400000000000091px;height:12.599999999999909px;box-sizing:border-box;background:#bcbcc0;"></div>
<div style="position:absolute;left:2367px;top:913.4px;width:2.400000000000091px;height:12.399999999999977px;box-sizing:border-box;background:#bcbcc0;"></div>
<div style="position:absolute;left:2367px;top:1065.5px;width:2.400000000000091px;height:13.5px;box-sizing:border-box;background:#bcbcc0;"></div>
<div style="position:absolute;left:2367px;top:1091.4px;width:2.400000000000091px;height:13.099999999999909px;box-sizing:border-box;background:#bcbcc0;"></div>
<div style="position:absolute;left:2367px;top:1116.4px;width:2.400000000000091px;height:12.599999999999909px;box-sizing:border-box;background:#bcbcc0;"></div>
<div style="position:absolute;left:2367px;top:1223px;width:2.400000000000091px;height:12.5px;box-sizing:border-box;background:#bcbcc0;"></div>
<div style="position:absolute;left:2367px;top:1248px;width:2.400000000000091px;height:12.5px;box-sizing:border-box;background:#bcbcc0;"></div>
<div style="position:absolute;left:2367px;top:1273px;width:2.400000000000091px;height:13px;box-sizing:border-box;background:#bcbcc0;"></div>
<div style="position:absolute;left:2367px;top:1298px;width:2.400000000000091px;height:3.599999999999909px;box-sizing:border-box;background:#bcbcc0;"></div>
<svg style="position:absolute;left:2338px;top:1144.6px" width="60" height="60"><circle cx="30" cy="30" r="25.8" fill="#202020" stroke="#666" stroke-width="1.5"/><circle cx="30" cy="30" r="20.9" fill="#fff"/><path d="M30 19.6V40.4M19.6 30H40.4" stroke="#202020" stroke-width="3.9"/></svg>
</body></html>
